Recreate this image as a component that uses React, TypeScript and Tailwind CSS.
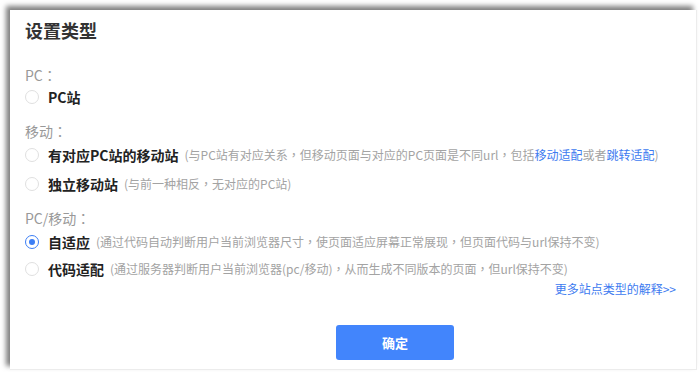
import React from 'react';

const font = { fontFamily: '"Noto Sans CJK SC", "Noto Sans", sans-serif' };
const tc = { fontFamily: '"Noto Sans CJK TC", sans-serif' };

// centred full-width punctuation, as the original font draws it
const P = (s: string) =>
  s.split(/([，：])/).map((part, i) =>
    part === '，' || part === '：' ? (
      <span key={i} style={tc}>
        {part}
      </span>
    ) : (
      part
    )
  );

const Radio = ({ checked }: { checked?: boolean }) => (
  <span
    className={
      checked
        ? 'w-[14px] h-[14px] rounded-full border border-[#3c7ef5] flex items-center justify-center shrink-0'
        : 'w-[14px] h-[14px] rounded-full border border-[#e0e0e0] shrink-0'
    }
  >
    {checked && <span className="w-[6px] h-[6px] rounded-full bg-[#3c7ef5]" />}
  </span>
);

const Option = ({ label, desc, checked, h }: any) => (
  <div className={'flex items-center ' + h}>
    <Radio checked={checked} />
    <span className="ml-[9px] text-[14px] font-bold text-[#222] leading-none">{label}</span>
    {desc && <span className="ml-[6px] text-[12px] text-[#a3a3a3] leading-none">{desc}</span>}
  </div>
);

export default function App() {
  return (
    <div className="w-[700px] h-[372px] bg-white overflow-hidden" style={font}>
      <div className="ml-[10px] mt-[10px] w-[687px] h-[360px] bg-white border-r border-b border-[#ececec] shadow-[-4px_-4px_5px_rgba(0,0,0,0.5)] pl-[15px] pr-[20px] pt-[8px]">
        <h1 className="text-[18px] font-bold text-[#333] leading-[24px]">设置类型</h1>

        <div className="mt-[23px] h-5 flex items-center text-[14px] text-[#999]">{P('PC：')}</div>
        <Option h="h-6" label="PC站" />

        <div className="mt-[12px] h-5 flex items-center text-[14px] text-[#999]">{P('移动：')}</div>
        <Option
          h="h-[28px]"
          label="有对应PC站的移动站"
          desc={
            <>
              {P('(与PC站有对应关系，但移动页面与对应的PC页面是不同url，包括')}
              <span className="text-[#3d7bf0]">移动适配</span>或者
              <span className="text-[#3d7bf0]">跳转适配</span>)
            </>
          }
        />
        <div className="mt-[1px]">
          <Option h="h-[28px]" label="独立移动站" desc={P('(与前一种相反，无对应的PC站)')} />
        </div>

        <div className="mt-[10px] h-5 flex items-center text-[14px] text-[#999]">{P('PC/移动：')}</div>
        <Option
          h="h-[28px]"
          checked
          label="自适应"
          desc={P('(通过代码自动判断用户当前浏览器尺寸，使页面适应屏幕正常展现，但页面代码与url保持不变)')}
        />
        <Option
          h="h-[26px]"
          label="代码适配"
          desc={P('(通过服务器判断用户当前浏览器(pc/移动)，从而生成不同版本的页面，但url保持不变)')}
        />
        <div className="flex justify-end h-[14px] items-center">
          <a className="text-[12px] text-[#3d7bf0] leading-none">更多站点类型的解释&gt;&gt;</a>
        </div>

        <button className="mt-[29px] ml-[311px] w-[118px] h-[35px] rounded-[3px] bg-[#4285fc] text-white text-[13px] font-bold flex items-center justify-center">
          确定
        </button>
      </div>
    </div>
  );
}
